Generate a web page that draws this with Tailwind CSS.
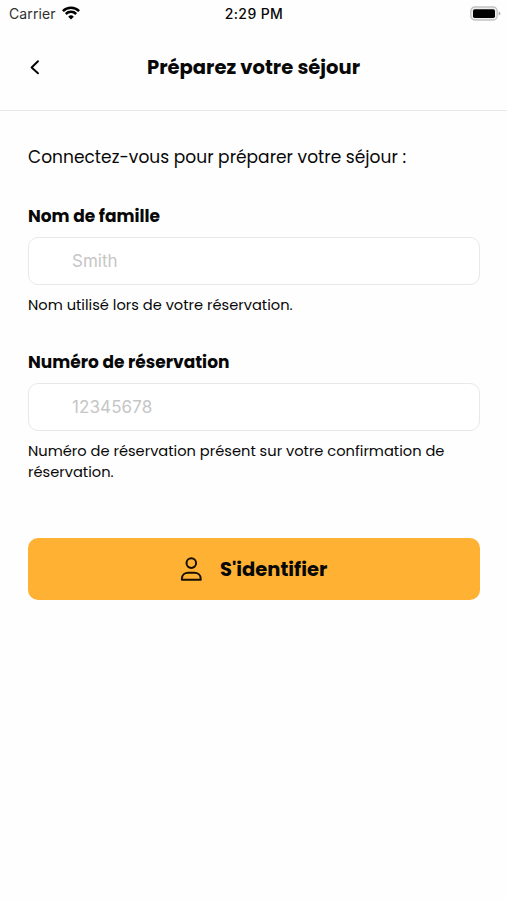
<!DOCTYPE html>
<html lang="fr">
<head>
<meta charset="utf-8">
<title>Préparez votre séjour</title>
<script src="https://cdn.jsdelivr.net/npm/@tailwindcss/browser@4"></script>
</head>
<body class="bg-white">
<div class="flex h-[900px] w-[507px] flex-col overflow-hidden bg-[#fefefe] font-[Poppins,Inter,sans-serif] text-[#080808]">
  <div class="grid h-7 grid-cols-3 items-center pr-[6px] pl-[9px] font-[Inter,sans-serif] text-[14px] leading-7">
    <div class="flex items-center gap-[6px]"><span class="tracking-[0.1px] text-[#303030]">Carrier</span>
      <svg class="-mt-[2px] h-[14px] w-[18px]" viewBox="0 0 18 14" fill="none" stroke="#000" stroke-width="2.5"><path d="M.9 5.1a11.6 11.6 0 0 1 16.2 0M3.8 8a7.4 7.4 0 0 1 10.4 0"/><path d="M9 13.5 6.2 10.7a4 4 0 0 1 5.6 0z" fill="#000" stroke="none"/></svg>
    </div>
    <div class="-ml-[2px] text-center font-medium tracking-[0.4px]">2:29 PM</div>
    <div class="flex justify-end">
      <svg class="-mt-[2px] h-[15px] w-[31px]" viewBox="0 0 31 15"><rect x=".8" y="1" width="26.4" height="13" rx="4" fill="#eee" stroke="#c2c2c2" stroke-width="1.3"/><rect x="3" y="3.2" width="22" height="8.8" rx="1.8" fill="#000"/><path d="M28.7 5.5q1.7.7 1.7 2t-1.7 2z" fill="#aaa"/></svg>
    </div>
  </div>
  <header class="grid h-[83px] grid-cols-[70px_1fr_70px] items-center border-b-[1.5px] border-[#e9e9e9] pb-1">
    <svg class="ml-[28px] h-[16px] w-[14px]" viewBox="0 0 14 16" fill="none" stroke="#000" stroke-width="1.9" stroke-linecap="round" stroke-linejoin="round"><path d="M10 2.2 3.6 8.5 10 14.3"/></svg>
    <h1 class="text-center text-[19.55px] leading-7 font-bold whitespace-nowrap">Préparez votre séjour</h1>
  </header>
  <main class="flex flex-col px-7 pt-[34px]">
    <p class="text-[17px] leading-6 tracking-[0.04px] whitespace-nowrap"><span>Connectez-vous pour préparer votre séjour :</span></p>
    <label class="mt-[35px] text-[17px] leading-6 font-bold"><span>Nom de famille</span></label>
    <div class="mt-[9px] flex h-[48px] w-[452px] items-center rounded-[10px] border-[1.5px] border-[#e8e8e8] bg-white pt-[2px] pl-[43px] font-[Inter,sans-serif] text-[17px] text-[#c6c6c6]"><span>Smith</span></div>
    <p class="mt-[10px] text-[14.65px] leading-[21px]"><span>Nom utilisé lors de votre réservation.</span></p>
    <label class="mt-[34px] text-[17px] leading-6 font-bold"><span>Numéro de réservation</span></label>
    <div class="mt-[9px] flex h-[48px] w-[452px] items-center rounded-[10px] border-[1.5px] border-[#e8e8e8] bg-white pt-[2px] pl-[43px] font-[Inter,sans-serif] text-[17px] tracking-[0.1px] text-[#c6c6c6]"><span>12345678</span></div>
    <p class="mt-[10px] text-[14.65px] leading-[21px]"><span>Numéro de réservation présent sur votre confirmation de</span><br><span>réservation.</span></p>
    <button class="mt-[55px] flex h-[62px] w-[452px] items-center rounded-[10px] bg-[#ffb133] pl-[152px] text-[19.5px] font-bold">
      <svg class="h-[26px] w-[23px]" viewBox="0 0 23 26" fill="none" stroke="#160f00" stroke-width="2" stroke-linejoin="round"><circle cx="11.3" cy="7.1" r="4.8"/><path d="M1.9 23.8v-.9c0-4 3.1-6.1 6.3-6.1h6.2c3.2 0 6.3 2.1 6.3 6.1v.9z"/></svg>
      <span class="mt-[2px] ml-[17px]">S'identifier</span>
    </button>
  </main>
</div>
</body>
</html>
